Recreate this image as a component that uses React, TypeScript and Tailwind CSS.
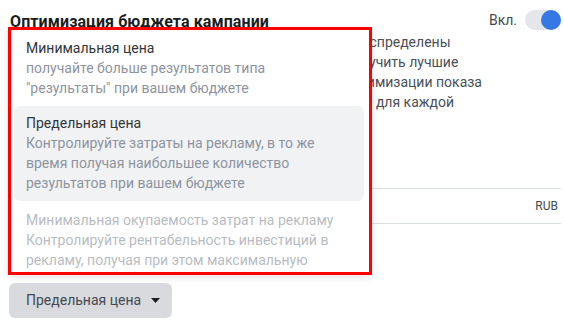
import React from "react";

const font = { fontFamily: "Roboto, 'Noto Sans', Arial, sans-serif" };

function Item({
  title,
  lines,
  active,
  disabled,
  extra,
}: {
  title: string;
  lines: string[];
  active?: boolean;
  disabled?: boolean;
  extra?: string;
}) {
  return (
    <div
      className={`rounded-[6px] pl-[12px] pr-2 pt-[7px] pb-[8px] text-[14px] leading-[20px] whitespace-nowrap ${
        active ? "bg-[#f1f2f4]" : ""
      } ${extra ?? ""}`}
    >
      <div className={disabled ? "text-[#b8bcc2]" : "text-[#333639]"}>{title}</div>
      {lines.map((l, i) => (
        <div key={i} className={disabled ? "text-[#b8bcc2]" : "text-[#8d949e]"}>
          {l}
        </div>
      ))}
    </div>
  );
}

export default function App() {
  return (
    <div className="relative h-[327px] w-[564px] overflow-hidden bg-white" style={font}>
      <div className="pl-[10px] pr-[3px] pt-[12px]">
        <div className="flex h-[20px] items-start justify-between">
          <div className="text-[16px] font-bold leading-[20px] tracking-[0.1px] text-[#1c1e21] whitespace-nowrap">
            Оптимизация бюджета кампании
          </div>
          <div className="mt-[-2px] flex items-center gap-[8px]">
            <span className="text-[14px] leading-[20px] text-[#444950]">Вкл.</span>
            <div className="flex h-[20px] w-[36px] items-center justify-end rounded-full bg-[#e4e6eb]">
              <div className="h-[20px] w-[20px] rounded-full bg-[#3578e5]" />
            </div>
          </div>
        </div>
        <div className="whitespace-nowrap text-[14px] leading-[20px] text-[#4b4f56]">
          <div className="ml-[344px]">распределены</div>
          <div className="ml-[335px]">получить лучшие</div>
          <div className="ml-[334px]">оптимизации показа</div>
          <div className="ml-[355px]">е для каждой</div>
        </div>
        <div className="mt-[76px] border-t border-[#dadde1]" />
        <div className="flex h-[34px] items-center justify-end pr-[3px] text-[12px] text-[#444950]">
          RUB
        </div>
        <div className="border-t border-[#dadde1]" />
      </div>
      <div className="absolute left-[8px] top-[27px] h-[248px] w-[364px] overflow-hidden border-[3px] border-[#ff0000] bg-white shadow-[0_2px_8px_rgba(0,0,0,0.12)]">
        <div className="pl-[3px] pr-[5px] pt-px">
          <Item
            title="Минимальная цена"
            lines={["получайте больше результатов типа", '"результаты" при вашем бюджете']}
          />
          <Item
            active
            title="Предельная цена"
            lines={[
              "Контролируйте затраты на рекламу, в то же",
              "время получая наибольшее количество",
              "результатов при вашем бюджете",
            ]}
          />
          <Item
            disabled
            extra="mt-[2px]"
            title="Минимальная окупаемость затрат на рекламу"
            lines={[
              "Контролируйте рентабельность инвестиций в",
              "рекламу, получая при этом максимальную",
            ]}
          />
        </div>
      </div>
      <div className="absolute left-[9px] top-[283px]">
        <div className="flex h-[35px] w-[163px] items-center gap-[10px] rounded-[6px] bg-[#d8dade] pl-[17px] text-[14px] text-[#444950]">
          <span>Предельная цена</span>
          <svg width="9" height="5" viewBox="0 0 9 5">
            <path d="M0 0 L9 0 L4.5 5 Z" fill="#1c1e21" />
          </svg>
        </div>
      </div>
    </div>
  );
}
